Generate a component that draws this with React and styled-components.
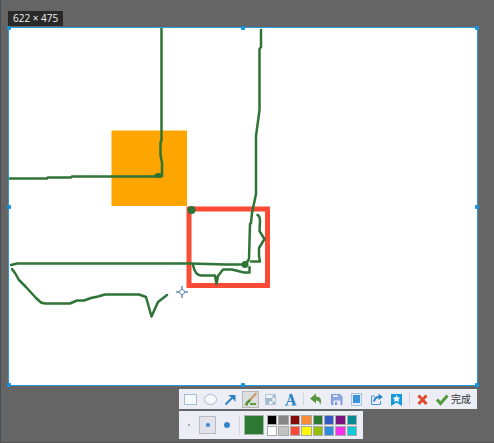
import React, { useState } from 'react';
import styled, { createGlobalStyle } from 'styled-components';

const COLORS = [
  ['black', '#000000'], ['gray', '#858585'], ['dark red', '#850b08'], ['orange', '#f78b38'],
  ['green', '#2c7a31'], ['blue', '#3159c8'], ['purple', '#7c1280'], ['teal', '#078b93'],
  ['white', '#ffffff'], ['silver', '#c2c2c2'], ['red', '#fa4937'], ['yellow', '#fcf900'],
  ['lime', '#94bd08'], ['sky blue', '#2d8be0'], ['magenta', '#f431ed'], ['cyan', '#12c8d4'],
];

const SIZES = [
  { name: 'Small', dot: 2 },
  { name: 'Medium', dot: 4 },
  { name: 'Large', dot: 6 },
];

const drawTools = [
  {
    name: 'Rectangle',
    icon: <rect x="2.5" y="3.5" width="12" height="10" fill="#f6f9fc" stroke="#a3bdd4" />,
  },
  {
    name: 'Ellipse',
    icon: <ellipse cx="8.5" cy="8.5" rx="6" ry="5" fill="#f6f9fc" stroke="#a9bccd" />,
  },
  {
    name: 'Arrow',
    icon: (
      <>
        <path d="M3.5 13.5L11 6" stroke="#2c83c6" strokeWidth="2" fill="none" />
        <path d="M6 4H13.5V11L11.5 8.5L9 6Z" fill="#2c83c6" />
      </>
    ),
  },
  {
    name: 'Brush',
    icon: (
      <>
        <path d="M14.5 2L7.5 9.5" stroke="#c79a69" strokeWidth="2" />
        <path d="M7.5 8L9 10L6 12.5L3 13.5L4.5 10.5Z" fill="#4b8c35" />
        <path d="M3 13.5H6M8 13H14" stroke="#5b9b38" strokeWidth="2" />
      </>
    ),
  },
  {
    name: 'Mosaic',
    icon: (
      <>
        <rect x="3" y="3" width="11" height="11" fill="#eef3f8" />
        <path d="M7 3H14V7H10.5V10.5H14V14H10.5V10.5H7V7H10.5V3ZM3 7H7V10.5H3ZM7 10.5V14H3V10.5Z" fill="#a5bacd" fillRule="evenodd" />
        <rect x="3.5" y="3.5" width="10" height="10" fill="none" stroke="#b4c5d5" />
      </>
    ),
  },
  {
    name: 'Text',
    icon: (
      <>
        <path d="M4.5 14L8.5 4" stroke="#3586c9" strokeWidth="1" fill="none" />
        <path d="M8.5 3L12.5 14" stroke="#3586c9" strokeWidth="3" fill="none" />
        <path d="M6 10.5H11M3 14H6.5M9.5 14H14.5" stroke="#3586c9" strokeWidth="1" fill="none" />
      </>
    ),
  },
];

const fileTools = [
  {
    name: 'Undo',
    icon: <path d="M2 7.5L8 2.5V5.5C12.5 5.5 14.5 9 12 14C12 11 11 9.5 8 9.5V12.5Z" fill="#56983f" />,
  },
  {
    name: 'Save',
    icon: (
      <>
        <path d="M3.5 3.5H12L14 5.5V13.5H3.5Z" fill="#8ea5df" stroke="#7d96d8" />
        <path d="M5 4H10V6H5Z" fill="#dbe4f8" />
        <path d="M5.5 9.5H12.5V14H5.5Z" fill="#e6ecfa" />
        <path d="M7 11H9V14H7Z" fill="#7d96d8" />
      </>
    ),
  },
  {
    name: 'Pin',
    icon: (
      <>
        <rect x="3.5" y="2.5" width="10" height="12" fill="#e2edf8" stroke="#a7c6e3" />
        <rect x="5" y="4" width="7" height="8" fill="#3b95de" />
      </>
    ),
  },
  {
    name: 'Share',
    icon: (
      <>
        <path d="M7 5H3.5V13.5H12.5V10" stroke="#4795d0" strokeWidth="1" fill="none" />
        <path d="M6 10.5C6.5 7.5 8 6 11 6" stroke="#2d87cb" strokeWidth="2" fill="none" />
        <path d="M10.5 2.5L15 6L10.5 9Z" fill="#2d87cb" />
      </>
    ),
  },
  {
    name: 'Favorite',
    icon: (
      <>
        <path d="M3 3H14V15L8.5 11.5L3 15Z" fill="#159ae1" />
        <path d="M8.5 4L9.7 6.4L12.3 6.7L10.4 8.4L10.9 11L8.5 9.7L6.1 11L6.6 8.4L4.7 6.7L7.3 6.4Z" fill="#fff" />
      </>
    ),
  },
];

function Icon({ children }) {
  return (
    <svg width="17" height="17" viewBox="0 0 17 17" aria-hidden="true">
      {children}
    </svg>
  );
}

function Drawing() {
  return (
    <Sketch viewBox="9 28 468 357" role="img" aria-label="Drawing">
      <rect x="111.5" y="130.5" width="75.5" height="75.5" fill="#ffa500" />
      <rect x="189" y="209" width="78.5" height="76.5" fill="none" stroke="#fc4a35" strokeWidth="5" />
      <g fill="none" stroke="#2f7436" strokeWidth="2.5" strokeLinejoin="round" strokeLinecap="round">
        <path d="M161.5 28V140L160.5 143V155L162 163V176" />
        <path d="M9 178.5H47L48 177.5H71L72 176.5H161" />
        <path d="M261 30V47L259.5 49V110L256 136V194L252 213L251 223L250 224L249 259L246 264" />
        <path d="M11 265L17 263.5H190L226 264.5H246" />
        <path d="M12 269L15 273L19 280L26 287L36 298L41 302.5L45 303.5H70L77 300.5H84L91 298L98 296.5L105 294.5H139L146 297L151.5 316.5L158 302L167 295" />
        <path d="M193 265Q195 275 201 275.5H215L216.5 284L218 276L223 269.5H232L244 272.5H249.5V267" />
        <path d="M257.5 215Q260 216 260 221L259.5 231L264.5 239L259 248V256L260 261.5H251" />
      </g>
      <g fill="#2c7433">
        <ellipse cx="158.5" cy="175.5" rx="4" ry="2.5" />
        <circle cx="191.5" cy="210" r="4" />
        <circle cx="245" cy="264.5" r="3.5" />
      </g>
      <g fill="none" stroke="#668daf">
        <path d="M182 286V290M182 294V298M176 292H180M184 292H188" strokeWidth="1.5" />
        <circle cx="182" cy="292" r="2.5" />
      </g>
    </Sketch>
  );
}

export default function App() {
  const [tool, setTool] = useState('Brush');
  const [size, setSize] = useState('Medium');
  const [color, setColor] = useState('#2c7a31');

  return (
    <Screen>
      <GlobalStyle />
      <SizeLabel>622 × 475</SizeLabel>
      <Selection>
        <Drawing />
        {[0, 50, 100].map((y) =>
          [0, 50, 100].map((x) =>
            x === 50 && y === 50 ? null : <Handle key={`${x}-${y}`} $x={x} $y={y} />
          )
        )}
      </Selection>
      <Panels>
        <Toolbar role="toolbar" aria-label="Annotation tools">
          <Group>
            {drawTools.map(({ name, icon }) => (
              <ToolButton
                key={name}
                aria-label={name}
                aria-pressed={tool === name}
                $active={tool === name}
                onClick={() => setTool(name)}
              >
                <Icon>{icon}</Icon>
              </ToolButton>
            ))}
          </Group>
          <Divider />
          <Group>
            {fileTools.map(({ name, icon }) => (
              <ToolButton key={name} aria-label={name}>
                <Icon>{icon}</Icon>
              </ToolButton>
            ))}
          </Group>
          <Divider />
          <ToolButton aria-label="Cancel">
            <Icon>
              <path d="M4.5 4.5L12.5 13M12.5 4.5L4.5 13" stroke="#e14b2d" strokeWidth="3" />
            </Icon>
          </ToolButton>
          <DoneButton>
            <svg width="14" height="17" viewBox="0 0 14 17" aria-hidden="true">
              <path d="M2 8.5L5.5 12.5L12.5 4.5" fill="none" stroke="#4f993d" strokeWidth="3" />
            </svg>
            完成
          </DoneButton>
        </Toolbar>
        <BrushBar role="toolbar" aria-label="Brush options">
          <SizeGroup>
            {SIZES.map(({ name, dot }) => (
              <SizeButton
                key={name}
                aria-label={name}
                aria-pressed={size === name}
                $active={size === name}
                onClick={() => setSize(name)}
              >
                <Dot $size={dot} />
              </SizeButton>
            ))}
          </SizeGroup>
          <Divider $tall />
          <CurrentColor aria-label="Current color" $color={color} />
          <Palette>
            {COLORS.map(([name, value]) => (
              <Swatch key={name} aria-label={name} $color={value} onClick={() => setColor(value)} />
            ))}
          </Palette>
        </BrushBar>
      </Panels>
    </Screen>
  );
}

const GlobalStyle = createGlobalStyle`
  * {
    box-sizing: border-box;
  }
  body {
    margin: 0;
    background: #656565;
    font-family: "Open Sans", "Noto Sans CJK SC", sans-serif;
  }
  button {
    padding: 0;
    border: 0;
    background: none;
    font-family: inherit;
    cursor: pointer;
  }
  svg {
    display: block;
  }
`;
const Screen = styled.main`
  min-height: 100vh;
  display: flex;
  flex-direction: column;
  align-items: flex-start;
  padding: 11px 16px 3px 7px;
  border-left: 1px solid #45505b;
  border-bottom: 1px solid #555;
`;
const SizeLabel = styled.div`
  height: 15px;
  margin-bottom: 1px;
  padding: 0 5px;
  background: #292929;
  color: #f2f2f2;
  font-size: 10px;
  line-height: 14px;
`;
const Selection = styled.section`
  position: relative;
  width: 100%;
  background: #fff;
  border: 1px solid #2499df;
`;
const Sketch = styled.svg`
  width: 100%;
  height: auto;
`;
const Handle = styled.span`
  position: absolute;
  left: ${({ $x }) => $x}%;
  top: ${({ $y }) => $y}%;
  width: 4px;
  height: 4px;
  border-radius: 1px;
  background: #1593df;
  transform: translate(-50%, -50%);
`;
const Panels = styled.div`
  display: flex;
  flex-direction: column;
  align-items: flex-start;
  align-self: flex-end;
  gap: 2px;
  margin: 3px 1px 0 0;
`;
const Toolbar = styled.div`
  display: flex;
  align-items: center;
  gap: 2px;
  height: 20px;
  padding: 0 6px 0 3px;
  background: #edeef5;
`;
const BrushBar = styled.div`
  display: flex;
  align-items: center;
  gap: 3px;
  height: 28px;
  padding: 0 6px 0 1px;
  background: #edeef5;
`;
const Group = styled.div`
  display: flex;
  align-items: center;
  gap: 3px;
`;
const SizeGroup = styled(Group)`
  gap: 2px;
`;
const ToolButton = styled.button`
  width: 17px;
  height: 17px;
  background: ${({ $active }) => ($active ? '#dcdedf' : 'transparent')};
  box-shadow: ${({ $active }) => ($active ? 'inset 0 0 0 1px #b5b7b9' : 'none')};
`;
const Divider = styled.span`
  width: 1px;
  height: ${({ $tall }) => ($tall ? 20 : 12)}px;
  margin: 0 ${({ $tall }) => ($tall ? 1 : 2)}px;
  background: #d1d4d9;
`;
const DoneButton = styled.button`
  display: flex;
  align-items: center;
  gap: 2px;
  padding-left: 2px;
  color: #333;
  font-size: 10px;
  line-height: 16px;
`;
const SizeButton = styled.button`
  display: flex;
  align-items: center;
  justify-content: center;
  width: 17px;
  height: 18px;
  background: ${({ $active }) => ($active ? '#e0e3eb' : 'transparent')};
  box-shadow: ${({ $active }) => ($active ? 'inset 0 0 0 1px #b6bac4' : 'none')};
`;
const Dot = styled.span`
  width: ${({ $size }) => $size}px;
  height: ${({ $size }) => $size}px;
  border-radius: 50%;
  background: ${({ $size }) => ($size > 2 ? '#3485ca' : '#8995a5')};
`;
const CurrentColor = styled.button`
  width: 20px;
  height: 20px;
  border: 1px solid #a9b2ad;
  background: ${({ $color }) => $color};
`;
const Palette = styled.div`
  display: grid;
  grid-template-columns: repeat(8, 1fr);
  gap: 1px;
  width: 90px;
`;
const Swatch = styled.button`
  height: 10px;
  border: 1px solid #aaa;
  background: ${({ $color }) => $color};
`;
